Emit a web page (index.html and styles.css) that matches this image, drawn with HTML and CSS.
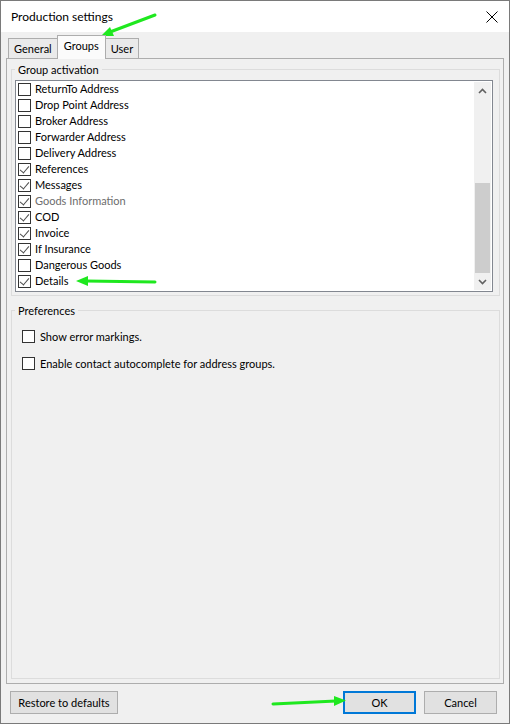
FILE: index.html
```html
<!DOCTYPE html>
<html lang="en">
<head>
<meta charset="UTF-8">
<meta name="viewport" content="width=device-width, initial-scale=1.0">
<title>Production settings</title>
<link rel="stylesheet" href="styles.css">
</head>
<body>
  <div class="window">
    <div class="titlebar">
      <span class="title">Production settings</span>
      <svg class="close" width="12" height="12" viewBox="0 0 12 12">
        <path d="M0.5 0.5 L11.5 11.5 M11.5 0.5 L0.5 11.5" stroke="#000" stroke-width="1" fill="none"/>
      </svg>
    </div>

    <div class="client">
      <div class="tabs">
        <div class="tab">General</div>
        <div class="tab active">Groups</div>
        <div class="tab">User</div>
      </div>

      <div class="tab-panel">
        <fieldset class="group group-activation">
          <legend>Group activation</legend>
          <div class="listbox">
            <ul class="items">
              <li><span class="cb"></span>ReturnTo Address</li>
              <li><span class="cb"></span>Drop Point Address</li>
              <li><span class="cb"></span>Broker Address</li>
              <li><span class="cb"></span>Forwarder Address</li>
              <li><span class="cb"></span>Delivery Address</li>
              <li><span class="cb checked"></span>References</li>
              <li><span class="cb checked"></span>Messages</li>
              <li class="disabled"><span class="cb checked"></span>Goods Information</li>
              <li><span class="cb checked"></span>COD</li>
              <li><span class="cb checked"></span>Invoice</li>
              <li><span class="cb checked"></span>If Insurance</li>
              <li><span class="cb"></span>Dangerous Goods</li>
              <li><span class="cb checked"></span>Details</li>
            </ul>
            <div class="scrollbar">
              <div class="arrow">
                <svg width="9" height="6" viewBox="0 0 9 6"><path d="M1 5 L4.5 1.5 L8 5" stroke="#606060" stroke-width="1.6" fill="none"/></svg>
              </div>
              <div class="track"></div>
              <div class="thumb"></div>
              <div class="arrow">
                <svg width="9" height="6" viewBox="0 0 9 6"><path d="M1 1 L4.5 4.5 L8 1" stroke="#606060" stroke-width="1.6" fill="none"/></svg>
              </div>
            </div>
          </div>
        </fieldset>

        <fieldset class="group prefs">
          <legend>Preferences</legend>
          <div class="pref-rows">
            <label class="pref"><span class="cb"></span>Show error markings.</label>
            <label class="pref"><span class="cb"></span>Enable contact autocomplete for address groups.</label>
          </div>
        </fieldset>
      </div>

      <div class="buttons">
        <button class="btn restore">Restore to defaults</button>
        <div class="right-buttons">
          <button class="btn default">OK</button>
          <button class="btn">Cancel</button>
        </div>
      </div>
    </div>

    <!-- annotation arrows drawn over the screenshot -->
    <svg class="annotations" width="510" height="727" viewBox="0 0 510 727">
      <g stroke="#1fe81f" stroke-width="3" fill="#1fe81f" stroke-linecap="round">
        <line x1="155" y1="15" x2="110" y2="32"/>
        <polygon points="101,36 110,27 114,36" stroke="none"/>
        <line x1="155" y1="282" x2="86" y2="281"/>
        <polygon points="76,281 88,276 88,286" stroke="none"/>
        <line x1="273" y1="704" x2="336" y2="701"/>
        <polygon points="346,700.5 334,696 334,706" stroke="none"/>
      </g>
    </svg>
  </div>
</body>
</html>
```

FILE: styles.css
```css
body, html {
  margin: 0;
  padding: 0;
  background: #fff;
  font-family: Lato, "Noto Sans", sans-serif;
  font-size: 11px;
  color: #000;
}

.window {
  position: relative;
  width: 510px;
  height: 724px;
  box-sizing: border-box;
  border: 1px solid #7a7a7a;
  display: flex;
  flex-direction: column;
}

.titlebar {
  height: 31px;
  background: #fff;
  display: flex;
  align-items: center;
  justify-content: space-between;
  padding: 0 11px 0 10px;
  flex-shrink: 0;
}

.title {
  font-size: 12px;
}

.close {
  display: block;
}

.client {
  flex: 1;
  background: #f0f0f0;
  display: flex;
  flex-direction: column;
  padding: 0 5px 9px 5px;
}

/* tabs */
.tabs {
  height: 26px;
  display: flex;
  align-items: flex-end;
  padding-left: 2px;
  flex-shrink: 0;
}

.tab {
  height: 19px;
  line-height: 19px;
  padding: 0 5px;
  border: 1px solid #adadad;
  border-bottom: none;
  background: #eaeaea;
  margin-left: -1px;
}

.tab:first-child {
  margin-left: 0;
}

.tab.active {
  position: relative;
  z-index: 1;
  height: 23px;
  line-height: 20px;
  margin-bottom: -1px;
  padding: 0 6px;
  background: #fbfbfb;
}

.tab-panel {
  flex: 1;
  border: 1px solid #adadad;
  display: flex;
  flex-direction: column;
  padding: 3px 3px 4px 4px;
  background: #f0f0f0;
}

/* group boxes */
.group {
  margin: 0;
  border: 1px solid #dcdcdc;
  min-width: 0;
}

.group legend {
  padding: 0 3px;
  line-height: 15px;
}

.group-activation {
  padding: 3px 6px 3px 3px;
}

.prefs {
  flex: 1;
  margin-top: 7px;
  padding: 5px 6px 3px 3px;
}

/* list box */
.listbox {
  height: 212px;
  box-sizing: border-box;
  border: 1px solid #828790;
  background: #fff;
  display: flex;
  padding: 1px 1px 1px 0;
}

.items {
  flex: 1;
  list-style: none;
  margin: -1px 0 0 0;
  padding: 0 0 0 2px;
}

.items li {
  height: 16px;
  line-height: 16px;
  display: flex;
  align-items: center;
  white-space: nowrap;
}

.items li.disabled {
  color: #6d6d6d;
}

.cb {
  position: relative;
  width: 11px;
  height: 11px;
  border: 1px solid #333;
  background: #fff;
  margin-right: 4px;
  flex-shrink: 0;
}

.cb.checked::after {
  content: "";
  position: absolute;
  left: 3px;
  top: 0;
  width: 4px;
  height: 8px;
  border-right: 1px solid #4d4d4d;
  border-bottom: 1px solid #4d4d4d;
  transform: rotate(40deg);
}

/* scrollbar */
.scrollbar {
  width: 17px;
  background: #f0f0f0;
  display: flex;
  flex-direction: column;
}

.scrollbar .arrow {
  height: 17px;
  display: flex;
  align-items: center;
  justify-content: center;
}

.scrollbar .track {
  height: 84px;
}

.scrollbar .thumb {
  flex: 1;
  background: #cdcdcd;
  margin: 0 1px;
}

/* preferences */
.pref-rows {
  padding-left: 7px;
}

.pref {
  height: 27px;
  display: flex;
  align-items: center;
}

.pref .cb {
  margin-right: 5px;
}

/* buttons */
.buttons {
  margin-top: 7px;
  display: flex;
  justify-content: space-between;
  padding: 0 7px 0 4px;
  flex-shrink: 0;
}

.right-buttons {
  display: flex;
  gap: 8px;
}

.btn {
  height: 23px;
  min-width: 73px;
  padding: 0 6px;
  font-family: inherit;
  font-size: 11px;
  color: #000;
  background: #e1e1e1;
  border: 1px solid #adadad;
  white-space: nowrap;
}

.btn.restore {
  width: 108px;
}

.btn.default {
  border: 2px solid #0078d7;
}

.annotations {
  position: absolute;
  left: -1px;
  top: -1px;
  pointer-events: none;
}
```
